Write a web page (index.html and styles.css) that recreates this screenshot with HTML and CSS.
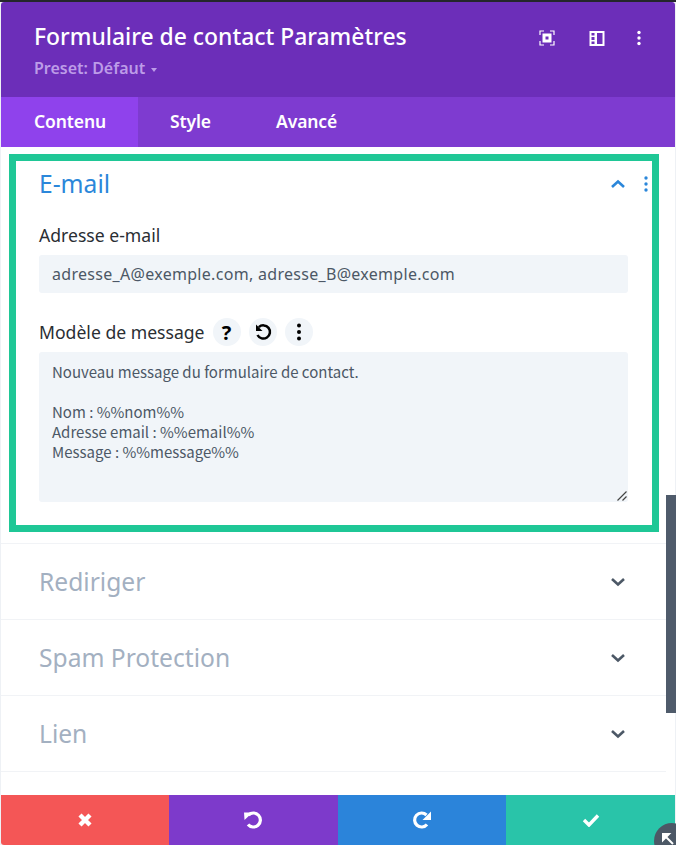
FILE: index.html
```html
<!DOCTYPE html>
<html lang="fr">
<head>
<meta charset="utf-8">
<title>Formulaire de contact Paramètres</title>
<link rel="stylesheet" href="styles.css">
</head>
<body>
<div class="topbar"></div>
<div class="modal">
  <header class="head">
    <div class="head-text">
      <h1 class="title">Formulaire de contact Paramètres</h1>
      <div class="preset">Preset: Défaut <span class="caret"></span></div>
    </div>
    <div class="head-icons">
      <svg class="hicon" viewBox="0 0 16 16" width="16" height="16"><path d="M1 5V1h4M11 1h4v4M15 11v4h-4M5 15H1v-4" fill="none" stroke="#fff" stroke-width="1.2"/><path fill="#fff" fill-rule="evenodd" d="M3.500 3.500h9v9h-9zM6.500 6.500v3h3v-3z"/></svg>
      <svg class="hicon" viewBox="0 0 16 16" width="16" height="16"><path fill="#fff" fill-rule="evenodd" d="M0.500 1h15v15h-15zM8 3v11h5.500V3zM2.500 3v2.500h3V3zM2.500 7v3h3V7zM2.500 11.500V14h3v-2.500z"/></svg>
      <svg class="hicon hicon-dots" viewBox="0 0 16 16" width="16" height="16"><circle cx="8" cy="2.500" r="1.700" fill="#fff"/><circle cx="8" cy="8" r="1.700" fill="#fff"/><circle cx="8" cy="13.500" r="1.700" fill="#fff"/></svg>
    </div>
  </header>
  <nav class="tabs">
    <div class="tab tab-active">Contenu</div>
    <div class="tab">Style</div>
    <div class="tab">Avancé</div>
  </nav>
  <main class="body">
    <section class="group group-open">
      <div class="group-head">
        <h2 class="group-title group-title-open">E-mail</h2>
        <svg class="chev" viewBox="0 0 16 10" width="16" height="10"><path d="M2 8l6-5.500L14 8" fill="none" stroke="#2b87da" stroke-width="2.600"/></svg>
        <svg class="group-dots" viewBox="0 0 4 16" width="4" height="16"><circle cx="2" cy="2" r="1.700" fill="#2b87da"/><circle cx="2" cy="8" r="1.700" fill="#2b87da"/><circle cx="2" cy="14" r="1.700" fill="#2b87da"/></svg>
      </div>
      <label class="label label-first">Adresse e-mail</label>
      <div class="input">adresse_A@exemple.com, adresse_B@exemple.com</div>
      <div class="label-row">
        <label class="label">Modèle de message</label>
        <span class="round"><span class="qmark">?</span></span>
        <span class="round"><svg viewBox="0 0 18 18" width="18" height="18"><path d="M4.800 4.200A6.600 6.600 0 1 1 3.500 12" fill="none" stroke="#000" stroke-width="2.500"/><path d="M2 1.500v6.500h6.500z" fill="#000"/></svg></span>
        <span class="round"><svg viewBox="0 0 4 18" width="4" height="18"><circle cx="2" cy="2.500" r="2" fill="#000"/><circle cx="2" cy="9" r="2" fill="#000"/><circle cx="2" cy="15.500" r="2" fill="#000"/></svg></span>
      </div>
      <div class="textarea">Nouveau message du formulaire de contact.

Nom : %%nom%%
Adresse email : %%email%%
Message : %%message%%<svg class="grip" viewBox="0 0 10 10" width="10" height="10"><path d="M0.500 9.500L9.500 0.500M5.500 9.500L9.500 5.500" stroke="#444" stroke-width="1.200"/></svg></div>
    </section>
    <section class="group">
      <div class="row"><h2 class="group-title">Rediriger</h2><svg class="chev" viewBox="0 0 16 10" width="16" height="10"><path d="M2 2l6 5.500L14 2" fill="none" stroke="#4c5866" stroke-width="2.600"/></svg></div>
    </section>
    <section class="group">
      <div class="row"><h2 class="group-title">Spam Protection</h2><svg class="chev" viewBox="0 0 16 10" width="16" height="10"><path d="M2 2l6 5.500L14 2" fill="none" stroke="#4c5866" stroke-width="2.600"/></svg></div>
    </section>
    <section class="group">
      <div class="row"><h2 class="group-title">Lien</h2><svg class="chev" viewBox="0 0 16 10" width="16" height="10"><path d="M2 2l6 5.500L14 2" fill="none" stroke="#4c5866" stroke-width="2.600"/></svg></div>
    </section>
    <div class="highlight"></div>
  </main>
  <footer class="foot">
    <div class="btn btn-red"><svg viewBox="0 0 16 16" width="16" height="16"><path d="M3 3l10 10M13 3L3 13" stroke="#fff" stroke-width="4.400"/></svg></div>
    <div class="btn btn-purple"><svg viewBox="0 0 20 20" width="20" height="20"><path d="M5.500 5A7 7 0 1 1 5 14.500" fill="none" stroke="#fff" stroke-width="3.200"/><path d="M1 2.500h8.500L1.500 10z" fill="#fff"/></svg></div>
    <div class="btn btn-blue"><svg viewBox="0 0 20 20" width="20" height="20"><path d="M14.500 5A7 7 0 1 0 15 14.500" fill="none" stroke="#fff" stroke-width="3.200"/><path d="M19 1.500v8.500h-8.500z" fill="#fff"/></svg></div>
    <div class="btn btn-green"><svg viewBox="0 0 18 14" width="18" height="14"><path d="M2 7l5 5L16 2.500" fill="none" stroke="#fff" stroke-width="3.400"/></svg></div>
  </footer>
</div>
<div class="scrollbar"></div>
<div class="resize"><svg viewBox="0 0 14 14" width="14" height="14"><path d="M2 2h6L2 8zM5 5l7 7" fill="#fff" stroke="#fff" stroke-width="2"/></svg></div>
</body>
</html>
```

FILE: styles.css
```css
* { box-sizing: border-box; }
html, body { margin: 0; padding: 0; }
body {
  position: relative;
  width: 676px;
  height: 845px;
  overflow: hidden;
  background: #eef1f5;
  font-family: "Noto Sans", "Open Sans", sans-serif;
}
.topbar {
  height: 2px;
  background: #24262b;
}
.modal {
  width: 674px;
  height: 843px;
  margin-left: 1px;
  background: #fff;
  display: flex;
  flex-direction: column;
  border-radius: 3px;
  overflow: hidden;
}
.head {
  height: 95px;
  flex: none;
  background: #6c2eb9;
  display: flex;
  justify-content: space-between;
  padding: 20px 28px 0 33px;
}
.title {
  margin: 0;
  font-size: 22.900px;
  line-height: 30px;
  font-weight: 500;
  color: #fff;
}
.preset {
  margin-top: 5px;
  font-size: 16px;
  line-height: 22px;
  font-weight: 600;
  color: #bd9ce8;
}
.caret {
  display: inline-block;
  width: 0;
  height: 0;
  margin-left: 2px;
  vertical-align: 2px;
  border-left: 3px solid transparent;
  border-right: 3px solid transparent;
  border-top: 4px solid #bd9ce8;
}
.head-icons {
  display: flex;
  gap: 34px;
  padding-top: 8px;
  height: 30px;
}
.hicon-dots { margin-left: -8px; }
.tabs {
  height: 50px;
  flex: none;
  background: #7e3bd0;
  display: flex;
}
.tab {
  width: 107px;
  padding-left: 32px;
  font-size: 17.500px;
  line-height: 48px;
  font-weight: 600;
  color: #fff;
  letter-spacing: -0.1px;
}
.tab + .tab { width: 106px; }
.tab-active {
  width: 137px;
  padding-left: 33px;
  background: #8f42ec;
}
.body {
  position: relative;
  flex: 1;
  min-height: 0;
  padding-right: 9px;
}
.group { border-bottom: 1px solid #f1f3f6; }
.group-open {
  height: 397px;
  padding: 16px 0 0 38px;
}
.group-head {
  display: flex;
  align-items: center;
  height: 42px;
  position: relative;
}
.group-title {
  margin: 0 0 1px;
  font-size: 24.600px;
  line-height: 41px;
  font-weight: 400;
  color: #a3b0c1;
}
.group-title-open { color: #2b87da; }
.chev { margin-left: auto; margin-right: 40px; flex: none; }
.group-dots { position: absolute; left: 605px; top: 13px; }
.label {
  display: block;
  font-size: 17.600px;
  line-height: 24px;
  font-weight: 450;
  color: #2a2e33;
}
.label-first { margin-top: 18px; }
.input {
  width: 589px;
  height: 38px;
  margin-top: 8px;
  padding-left: 13px;
  background: #f1f5f9;
  border-radius: 3px;
  font-size: 16px;
  line-height: 38px;
  font-weight: 400;
  letter-spacing: 0.3px;
  color: #4c5866;
}
.label-row {
  display: flex;
  align-items: center;
  gap: 8px;
  height: 28px;
  margin-top: 25px;
}
.round {
  width: 28px;
  height: 28px;
  border-radius: 50%;
  background: #f1f5f9;
  display: flex;
  align-items: center;
  justify-content: center;
}
.qmark {
  font-size: 20px;
  font-weight: 700;
  color: #000;
}
.textarea {
  position: relative;
  width: 589px;
  height: 150px;
  margin-top: 6px;
  padding: 10px 13px;
  background: #f1f5f9;
  border-radius: 3px;
  font-family: "Noto Sans CJK SC", "Noto Sans", sans-serif;
  font-size: 15px;
  line-height: 20px;
  color: #4c5866;
  white-space: pre-wrap;
}
.grip { position: absolute; right: 1px; bottom: 1px; }
.row {
  height: 75px;
  padding: 0 0 0 38px;
  display: flex;
  align-items: center;
}
.highlight {
  position: absolute;
  left: 8px;
  top: 7px;
  width: 650px;
  height: 378px;
  border: 7px solid #1fc796;
  pointer-events: none;
}
.scrollbar {
  position: absolute;
  right: 0;
  top: 495px;
  width: 10px;
  height: 218px;
  background: #4f5b6b;
}
.foot {
  height: 50px;
  flex: none;
  display: flex;
}
.btn {
  flex: 1;
  display: flex;
  align-items: center;
  justify-content: center;
}
.btn-red { flex: none; width: 168px; background: #f45656; }
.btn-purple { background: #7d3acb; }
.btn-blue { background: #2b84da; }
.btn-green { background: #29c4a9; }
.resize {
  position: absolute;
  right: -14px;
  bottom: -14px;
  width: 36px;
  height: 36px;
  border-radius: 50%;
  background: #4c5866;
  padding: 6px 0 0 7px;
}
```
